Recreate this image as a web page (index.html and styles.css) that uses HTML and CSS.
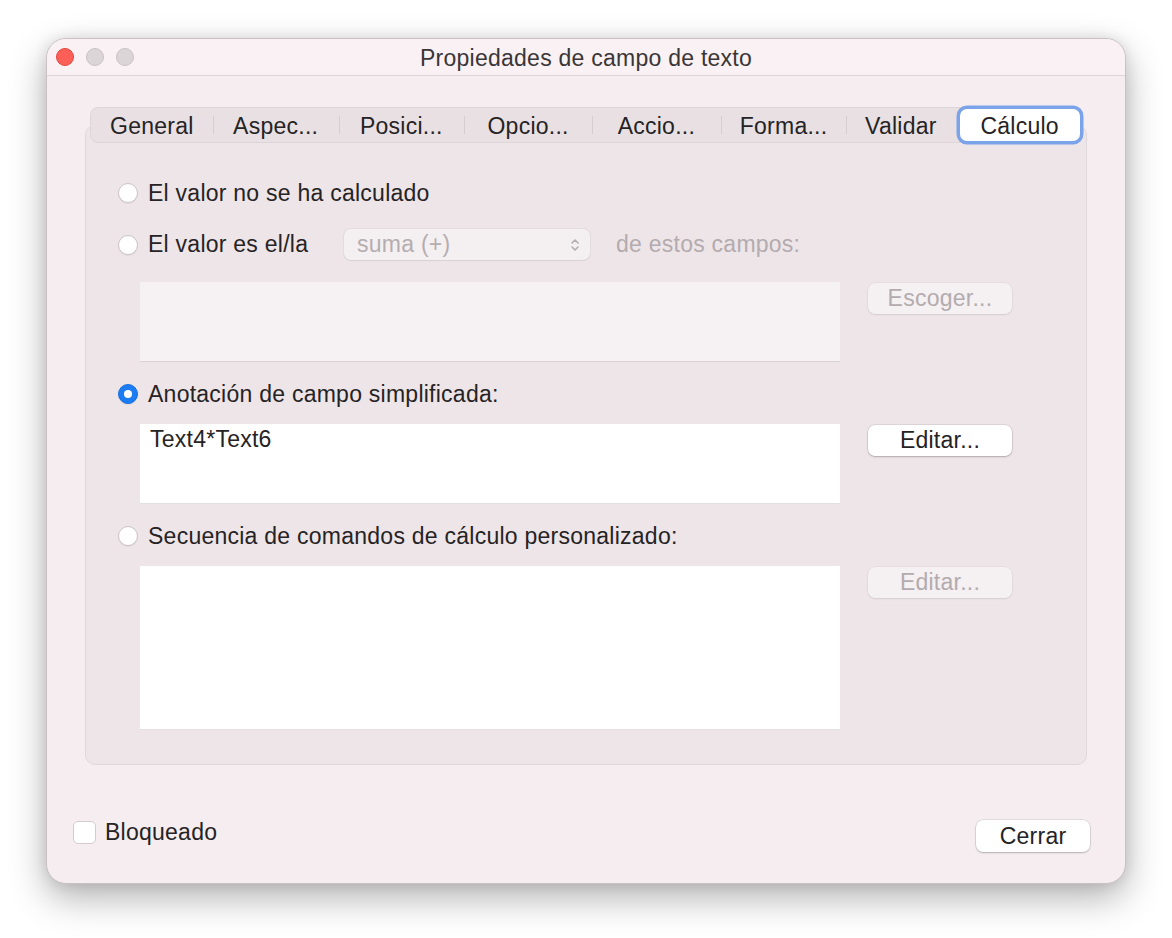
FILE: index.html
```html
<!DOCTYPE html>
<html lang="es">
<head>
    <meta charset="UTF-8">
    <title>Propiedades de campo de texto</title>
    <link rel="stylesheet" href="styles.css">
</head>
<body>
    <div class="window">
        <div class="titlebar">
            <div class="lights">
                <span class="light light-close"></span>
                <span class="light light-min"></span>
                <span class="light light-max"></span>
            </div>
            <div class="title">Propiedades de campo de texto</div>
            <div></div>
        </div>

        <div class="tabview">
            <div class="tabbar">
                <div class="tab" style="width: 122px;">General</div>
                <div class="tab" style="width: 126px;">Aspec...</div>
                <div class="tab" style="width: 126px;">Posici...</div>
                <div class="tab" style="width: 128px;">Opcio...</div>
                <div class="tab" style="width: 129px;">Accio...</div>
                <div class="tab" style="width: 126px;">Forma...</div>
                <div class="tab tab-last" style="width: 109px;">Validar</div>
                <div class="tab tab-active" style="width: 126px;"><span>Cálculo</span></div>
            </div>

            <div class="panel">
                <!-- Option 1 -->
                <div class="radio-row">
                    <span class="radio"></span>
                    <span>El valor no se ha calculado</span>
                </div>

                <!-- Option 2 -->
                <div class="radio-row row-select">
                    <span class="radio"></span>
                    <span class="label-fixed">El valor es el/la</span>
                    <div class="select">
                        <span>suma (+)</span>
                        <svg width="10" height="16" viewBox="0 0 10 16">
                            <path d="M2 6 L5 3 L8 6" fill="none" stroke="#b5adb0" stroke-width="1.6" stroke-linecap="round" stroke-linejoin="round"/>
                            <path d="M2 10 L5 13 L8 10" fill="none" stroke="#b5adb0" stroke-width="1.6" stroke-linecap="round" stroke-linejoin="round"/>
                        </svg>
                    </div>
                    <span class="muted after-select">de estos campos:</span>
                </div>
                <div class="field-row first-field">
                    <div class="box box-disabled" style="height: 80px;"></div>
                    <button class="btn btn-disabled">Escoger...</button>
                </div>

                <!-- Option 3 -->
                <div class="radio-row row-gap">
                    <span class="radio radio-on"></span>
                    <span>Anotación de campo simplificada:</span>
                </div>
                <div class="field-row">
                    <div class="box" style="height: 80px;">Text4*Text6</div>
                    <button class="btn">Editar...</button>
                </div>

                <!-- Option 4 -->
                <div class="radio-row row-gap">
                    <span class="radio"></span>
                    <span>Secuencia de comandos de cálculo personalizado:</span>
                </div>
                <div class="field-row">
                    <div class="box" style="height: 164px;"></div>
                    <button class="btn btn-disabled">Editar...</button>
                </div>
            </div>
        </div>

        <div class="footer">
            <label class="check-row">
                <span class="checkbox"></span>
                <span>Bloqueado</span>
            </label>
            <button class="btn btn-close">Cerrar</button>
        </div>
    </div>
</body>
</html>
```

FILE: styles.css
```css
html {
    background-color: #ffffff;
}

body {
    background-color: #ffffff;
    color: #262325;
    font-family: "Liberation Sans", Arial, sans-serif;
    font-size: 23px;
    letter-spacing: 0.25px;
    margin: 0;
    padding: 38px 0 0 46px;
    min-height: 100vh;
    box-sizing: border-box;
}

.window {
    width: 1080px;
    height: 846px;
    box-sizing: border-box;
    background-color: #f5edef;
    border-radius: 20px;
    border: 1px solid #c9c1c4;
    box-shadow: 0 14px 36px rgba(0, 0, 0, 0.3), 0 0 14px rgba(0, 0, 0, 0.1);
    overflow: hidden;
}

.titlebar {
    height: 37px;
    box-sizing: border-box;
    padding-top: 2px;
    background-color: #f9f1f3;
    border-bottom: 1px solid #ddd4d7;
    display: grid;
    grid-template-columns: 1fr auto 1fr;
    align-items: center;
}

.lights {
    display: flex;
    gap: 12px;
    padding-left: 9px;
    margin-top: -2px;
}

.light {
    width: 18px;
    height: 18px;
    box-sizing: border-box;
    border-radius: 50%;
    background-color: #dcd5d8;
    border: 1px solid #c9c1c4;
}

.light-close {
    background-color: #fe5f57;
    border-color: #e1463f;
}

.title {
    color: #3a3638;
}

.tabview {
    margin: 31px 38px 0 38px;
}

.tabbar {
    position: relative;
    z-index: 1;
    width: 992px;
    height: 36px;
    margin: 0 auto;
    box-sizing: border-box;
    display: flex;
    background-color: #e8e0e3;
    border: 1px solid #ddd5d8;
    border-radius: 8px;
}

.tab {
    display: flex;
    align-items: center;
    justify-content: center;
    padding-top: 3px;
    position: relative;
    color: #262325;
}

.tab + .tab::before {
    content: "";
    position: absolute;
    left: 0;
    top: 8px;
    width: 1px;
    height: 18px;
    background-color: #d6cdd0;
}

.tab-active {
    padding-top: 0;
}

.tab-active::before {
    display: none;
}

.tab-active span {
    width: 120px;
    height: 32px;
    margin-top: -1px;
    margin-right: -3px;
    padding-top: 3px;
    box-sizing: border-box;
    display: flex;
    align-items: center;
    justify-content: center;
    background-color: #ffffff;
    border-radius: 7px;
    box-shadow: 0 0 0 3.5px #7ba3ea;
}

.panel {
    height: 640px;
    margin-top: -18px;
    box-sizing: border-box;
    padding: 52px 32px 0 32px;
    background-color: #eee5e8;
    border: 1px solid #e0d7da;
    border-radius: 10px;
}

.radio-row {
    display: flex;
    align-items: center;
    height: 30px;
}

.row-select {
    height: 31px;
    margin-top: 21px;
}

.row-gap {
    margin-top: 17px;
}

.radio {
    width: 20px;
    height: 20px;
    box-sizing: border-box;
    flex-shrink: 0;
    border-radius: 50%;
    background-color: #ffffff;
    border: 1px solid #cbc3c6;
    box-shadow: 0 1px 1px rgba(0, 0, 0, 0.06);
    margin-right: 10px;
    position: relative;
}

.radio-on {
    background-color: #1b7cf4;
    border-color: #1670de;
}

.radio-on::after {
    content: "";
    position: absolute;
    left: 5px;
    top: 5px;
    width: 8px;
    height: 8px;
    border-radius: 50%;
    background-color: #ffffff;
}

.label-fixed {
    width: 196px;
}

.select {
    width: 246px;
    height: 31px;
    box-sizing: border-box;
    padding: 0 10px 0 13px;
    display: flex;
    align-items: center;
    justify-content: space-between;
    background-color: #f4eff1;
    border-radius: 7px;
    box-shadow: 0 0 0 1px rgba(0, 0, 0, 0.04), 0 1px 1px rgba(0, 0, 0, 0.05);
    color: #b5adb0;
}

.muted {
    color: #b3abae;
}

.after-select {
    margin-left: 26px;
}

.field-row {
    display: flex;
    align-items: flex-start;
    padding-left: 22px;
    margin-top: 15px;
}

.first-field {
    margin-top: 22px;
}

.box {
    width: 700px;
    box-sizing: border-box;
    padding: 2px 10px;
    background-color: #ffffff;
    border-bottom: 1px solid #e4dfe1;
    line-height: 26px;
}

.box-disabled {
    background-color: #f6f2f3;
    border-bottom-color: #d8d1d4;
}

.btn {
    width: 144px;
    height: 31px;
    margin-left: 28px;
    margin-top: 1px;
    font-family: inherit;
    font-size: 23px;
    letter-spacing: 0.25px;
    color: #262325;
    background-color: #ffffff;
    border: none;
    border-radius: 7px;
    box-shadow: 0 0 0 0.5px rgba(0, 0, 0, 0.14), 0 1px 2px rgba(0, 0, 0, 0.2);
    padding: 0;
}

.btn-disabled {
    background-color: #f5f0f2;
    color: #b3abae;
    box-shadow: 0 0 0 0.5px rgba(0, 0, 0, 0.06), 0 1px 2px rgba(0, 0, 0, 0.08);
}

.footer {
    display: flex;
    justify-content: space-between;
    align-items: flex-start;
    margin-top: 55px;
    padding: 0 35px 0 26px;
}

.check-row {
    display: flex;
    align-items: center;
    gap: 9px;
    height: 24px;
}

.checkbox {
    width: 23px;
    height: 23px;
    box-sizing: border-box;
    background-color: #ffffff;
    border: 1px solid #d3cbce;
    border-radius: 5px;
}

.btn-close {
    width: 114px;
    height: 32px;
    margin: 0;
}
```
